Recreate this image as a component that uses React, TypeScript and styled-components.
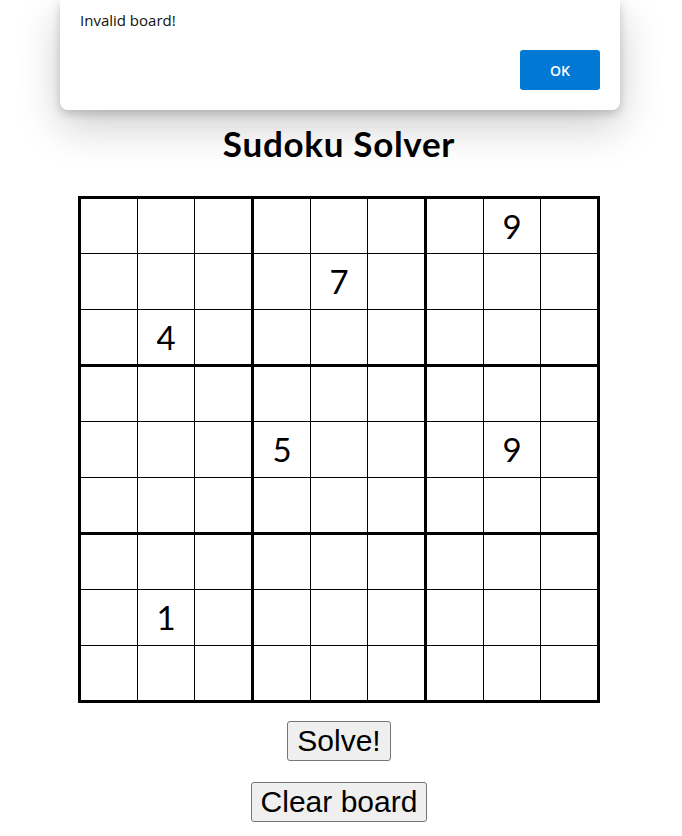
import React from 'react';
import styled, { createGlobalStyle } from 'styled-components';

const GlobalStyle = createGlobalStyle`
  html, body {
    margin: 0;
    padding: 0;
    background: #fff;
  }
  * {
    box-sizing: border-box;
  }
`;

const Page = styled.div`
  position: relative;
  width: 682px;
  min-height: 836px;
  padding: 123px 4px 0 0;
  display: flex;
  flex-direction: column;
  align-items: center;
`;

const Title = styled.h1`
  margin: 0 0 33px;
  font-family: Lato, 'Open Sans', sans-serif;
  font-weight: 700;
  font-size: 35px;
  letter-spacing: 0.7px;
  line-height: 40px;
  color: #000;
`;

const Board = styled.div`
  width: 522px;
  height: 507px;
  padding: 3px;
  background: #000;
  display: grid;
  grid-template-columns: repeat(3, 1fr);
  grid-template-rows: repeat(3, 1fr);
  gap: 3px;
`;

const Box = styled.div`
  display: grid;
  grid-template-columns: repeat(3, 1fr);
  grid-template-rows: repeat(3, 1fr);
  gap: 1px;
  background: #000;
`;

const Cell = styled.div`
  background: #fff;
  display: flex;
  align-items: center;
  justify-content: center;
  font-family: Lato, 'Open Sans', sans-serif;
  font-size: 33px;
  color: #000;
`;

const Actions = styled.div`
  margin-top: 18px;
  display: flex;
  flex-direction: column;
  align-items: center;
  gap: 21px;
`;

const Button = styled.button`
  font-family: 'Liberation Sans', Arial, sans-serif;
  font-size: 30px;
  line-height: 34px;
  color: #000;
  padding: 2px 9px;
  background: #efefef;
  border: 1px solid #767676;
  border-radius: 3px;
  cursor: pointer;
`;

const Dialog = styled.div`
  position: absolute;
  top: 0;
  left: 60px;
  width: 560px;
  height: 110px;
  background: #fff;
  border-radius: 0 0 8px 8px;
  box-shadow: 0 4px 10px rgba(0, 0, 0, 0.18), 0 16px 44px rgba(0, 0, 0, 0.2);
  padding: 10px 20px 20px;
  display: flex;
  flex-direction: column;
`;

const Message = styled.p`
  margin: 0;
  font-family: 'Open Sans', 'Noto Sans', sans-serif;
  font-size: 15px;
  line-height: 20px;
  color: #111;
`;

const DialogFooter = styled.div`
  margin-top: auto;
  display: flex;
  justify-content: flex-end;
`;

const OkButton = styled.button`
  width: 80px;
  height: 40px;
  border: none;
  border-radius: 3px;
  background: #0078d4;
  color: #fff;
  font-family: 'Open Sans', 'Noto Sans', sans-serif;
  font-size: 14px;
  font-weight: 600;
`;

// row, column -> value
const givens: Record<string, number> = {
  '0-7': 9,
  '1-4': 7,
  '2-1': 4,
  '4-3': 5,
  '4-7': 9,
  '7-1': 1,
};

const App = () => {
  const boxes = [];
  for (let b = 0; b < 9; b++) {
    const br = Math.floor(b / 3) * 3;
    const bc = (b % 3) * 3;
    const cells = [];
    for (let i = 0; i < 9; i++) {
      const r = br + Math.floor(i / 3);
      const c = bc + (i % 3);
      cells.push(<Cell key={i}>{givens[`${r}-${c}`] ?? ''}</Cell>);
    }
    boxes.push(<Box key={b}>{cells}</Box>);
  }

  return (
    <>
      <GlobalStyle />
      <Page>
        <Title>Sudoku Solver</Title>
        <Board>{boxes}</Board>
        <Actions>
          <Button type="button">Solve!</Button>
          <Button type="button">Clear board</Button>
        </Actions>
        <Dialog role="alertdialog">
          <Message>Invalid board!</Message>
          <DialogFooter>
            <OkButton type="button">OK</OkButton>
          </DialogFooter>
        </Dialog>
      </Page>
    </>
  );
};

export default App;
